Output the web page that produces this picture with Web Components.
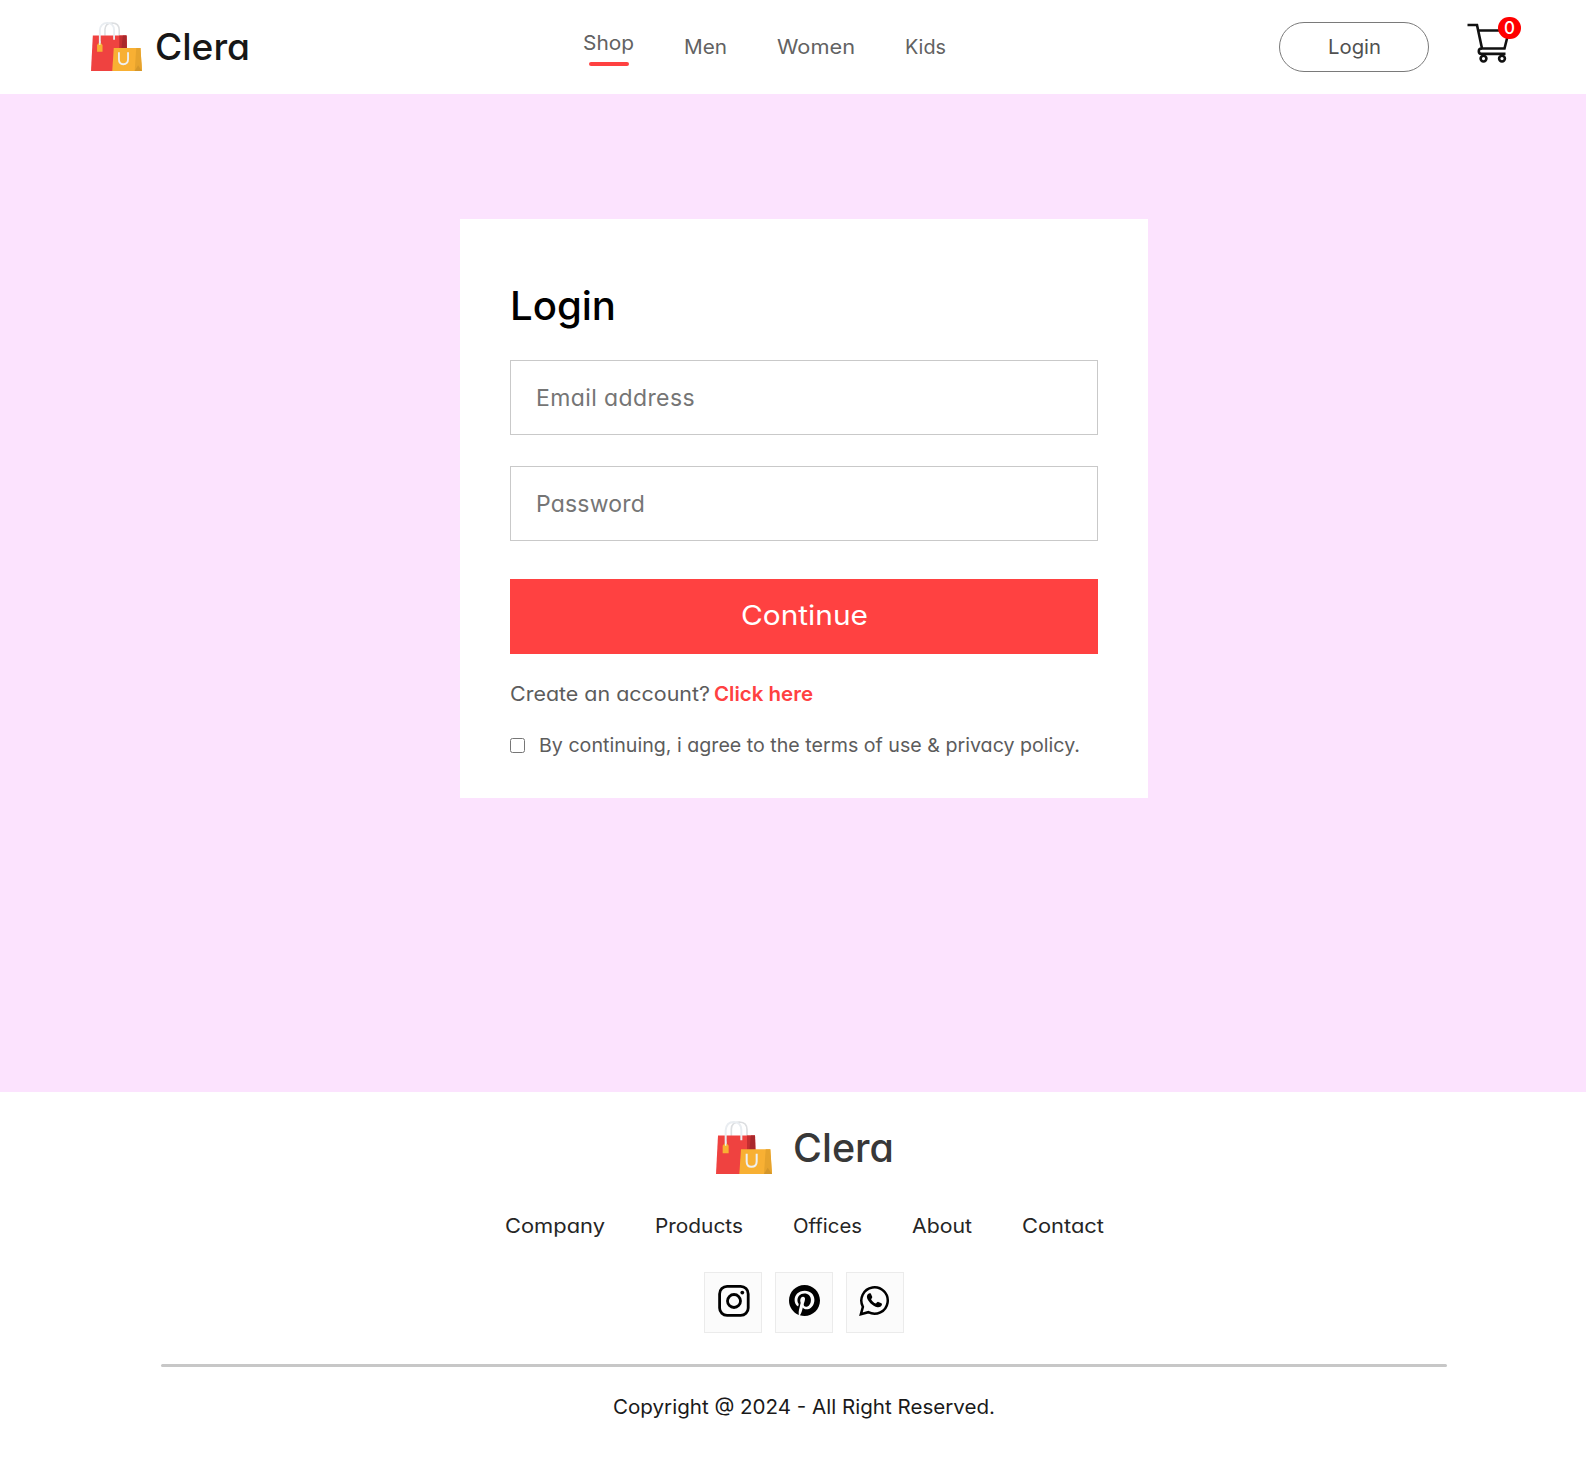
<!DOCTYPE html>
<html lang="en">
<head>
<meta charset="utf-8">
<title>Clera</title>
<style>
body{margin:0;background:#fff;font-family:Inter,"Open Sans",sans-serif;font-feature-settings:"cv11" 1}
</style>
</head>
<body>
<clera-app></clera-app>
<script>
function define(name, html, ready) {
  const t = document.createElement('template');
  t.innerHTML = html;
  customElements.define(name, class extends HTMLElement {
    connectedCallback() {
      if (this.shadowRoot) return;
      this.attachShadow({mode: 'open'}).append(t.content.cloneNode(true));
      if (ready) ready(this, this.shadowRoot);
    }
  });
}

// Single line of text whose glyphs are widened to a given advance width.
define('fit-text', `<style>
  :host{display:inline-block;white-space:nowrap;line-height:30px;font-size:20px;text-align:left}
  span{display:inline-block;transform-origin:0 50%}
</style><span><slot></slot></span>`, (el, root) => {
  const w = parseFloat(el.getAttribute('w'));
  const span = root.querySelector('span');
  const natural = span.getBoundingClientRect().width;
  el.style.width = w + 'px';
  span.style.transform = 'scaleX(' + (w / natural) + ')';
});

define('bag-logo', `<style>:host{display:block}svg{display:block;width:100%;height:100%}</style>
<svg viewBox="48 122 168 160" preserveAspectRatio="none">
  <path d="M94 167V146Q95 125 118 125Q141 126 141 148V167" fill="none" stroke="#dcdee0" stroke-width="5"/>
  <path d="M54 166H165L168 282H48Z" fill="#ef4240"/>
  <path d="M141 166H165L166 210H141Z" fill="#c42e31"/>
  <path d="M153 166H165L166 210H148Z" fill="#a9282c"/>
  <path d="M77 194V150Q79 125 102 125Q123 126 124 148V180" fill="none" stroke="#e9edf1" stroke-width="6"/>
  <path d="M68 197L73 191H81L86 197V219H68Z" fill="#f8b033"/>
  <path d="M77 184V197" stroke="#e9edf1" stroke-width="4"/>
  <path d="M123 207H211L216 282H118Z" fill="#f8b033"/>
  <path d="M197 207H211L216 282H192Z" fill="#e6a32d"/>
  <path d="M203 263L216 282H192Z" fill="#d4962a"/>
  <path d="M140 221V244Q140 260 154 260Q170 260 170 244V221" fill="none" stroke="#eef0f2" stroke-width="6"/>
</svg>`);

define('nav-item', `<style>
  :host{display:flex;flex-direction:column;align-items:center;gap:4px;color:#626262}
  i{display:none;width:40px;height:4px;border-radius:4px;background:#ff4141}
  :host([active]) i{display:block}
</style><slot></slot><i></i>`);

define('cart-icon', `<style>
  :host{display:block;position:relative;width:42px;height:40px}
  svg{display:block}
  b{position:absolute;left:31px;top:-6px;width:23px;height:22px;border-radius:11px;background:#f00;color:#fff;font-size:17px;font-weight:500;line-height:22px;text-align:center}
</style>
<svg width="42" height="40" viewBox="0 0 42 40" fill="none" stroke="#111" stroke-width="2.6">
  <path d="M.5 2H10L15 25.500H37.500L42 7.500H11"/>
  <path d="M15 25.500H14.500A2.600 2.600 0 0 0 14.500 30.900H38.500"/>
  <circle cx="16.500" cy="35.600" r="2.900"/><circle cx="35" cy="35.600" r="2.900"/>
</svg><b>0</b>`);

define('site-header', `<style>
  :host{display:flex;align-items:center;height:94px;box-sizing:border-box;padding-left:90.500px}
  bag-logo{width:51px;height:49px;margin-bottom:1px}
  .name{font-size:37px;font-weight:500;color:#171717;margin:0 0 1px 13.500px}
  nav{display:flex;align-items:center;gap:50px;margin-left:333px}
  button{margin:0 0 0 333px;width:150px;height:50px;padding:0;border:1px solid #7a7a7a;border-radius:75px;background:#fff;color:#515151;font:inherit;font-feature-settings:inherit}
  cart-icon{margin:-9px 0 0 38px}
</style>
<bag-logo></bag-logo><fit-text class="name" w="95">Clera</fit-text>
<nav>
  <nav-item active><fit-text w="51">Shop</fit-text></nav-item>
  <nav-item><fit-text w="43">Men</fit-text></nav-item>
  <nav-item><fit-text w="78">Women</fit-text></nav-item>
  <nav-item><fit-text w="41">Kids</fit-text></nav-item>
</nav>
<button><fit-text w="53">Login</fit-text></button>
<cart-icon></cart-icon>`);

define('text-field', `<style>
  :host{display:block;height:75px}
  input{display:block;width:100%;height:75px;box-sizing:border-box;border:1px solid #c9c9c9;padding:0 0 0 25px;outline:none;font:inherit;font-size:23px;font-feature-settings:inherit;background:#fff}
  input::placeholder{color:#757575}
  span{font-size:23px;white-space:nowrap;position:absolute;visibility:hidden}
</style><input>`, (el, root) => {
  const input = root.querySelector('input');
  input.type = el.getAttribute('type');
  input.placeholder = el.getAttribute('label');
  const probe = document.createElement('span');
  probe.textContent = input.placeholder;
  root.append(probe);
  const w = probe.getBoundingClientRect().width;
  probe.remove();
  input.style.letterSpacing = ((parseFloat(el.getAttribute('w')) - w) / input.placeholder.length) + 'px';
});

define('login-card', `<style>
  :host{display:block;width:688px;height:579px;box-sizing:border-box;background:#fff;padding:57px 50px 0}
  h1{margin:0 0 24px;height:60px;font-size:40px;font-weight:500;line-height:60px;color:#000}
  h1 fit-text{font-size:40px;line-height:60px}
  .fields{display:flex;flex-direction:column;gap:31px}
  button{display:block;width:588px;height:75px;margin:38px 0 25px;padding:0 0 2px;border:0;background:#ff4141;color:#fff;font:inherit;font-feature-settings:inherit}
  button fit-text{font-size:27px;line-height:40px}
  p{margin:0;display:flex;gap:4px;height:30px;color:#5c5c5c}
  p b{color:#ff4141;font-weight:600}
  .agree{display:flex;align-items:center;height:30px;margin-top:21px;color:#5c5c5c}
  .agree fit-text{font-size:19px;margin-top:2px}
  input{appearance:none;width:15px;height:15px;margin:0 14px 0 0;box-sizing:border-box;border:1px solid #767676;border-radius:2.500px;background:#fff}
</style>
<h1><fit-text w="106">Login</fit-text></h1>
<div class="fields"><text-field type="text" label="Email address" w="159"></text-field><text-field type="password" label="Password" w="109"></text-field></div>
<button><fit-text w="127">Continue</fit-text></button>
<p><fit-text w="200">Create an account?</fit-text><b><fit-text w="99">Click here</fit-text></b></p>
<div class="agree"><input type="checkbox"><fit-text w="541">By continuing, i agree to the terms of use &amp; privacy policy.</fit-text></div>`);

define('social-link', `<style>
  :host{display:flex;justify-content:center;align-items:flex-start;width:58px;height:61px;box-sizing:border-box;border:1px solid #ebebeb;background:#fbfbfb;padding-top:12px}
</style><slot></slot>`);

define('site-footer', `<style>
  :host{display:flex;flex-direction:column;align-items:center;box-sizing:border-box;padding:26px 0 0 22px;height:367px;color:#252525}
  .logo{display:flex;align-items:center;height:60px;padding-left:2px}
  bag-logo{width:56px;height:53px;margin-bottom:1px}
  .logo fit-text{font-size:39px;font-weight:500;color:#383838;margin-left:21px}
  .links{display:flex;gap:50px;margin-top:33px}
  .social{display:flex;gap:13px;margin-top:31px}
  hr{width:1286px;height:3px;margin:31px 0 25px;border:0;border-radius:2px;background:#c7c7c7}
  .copy{color:#1a1a1a}
</style>
<div class="logo"><bag-logo></bag-logo><fit-text w="101">Clera</fit-text></div>
<div class="links"><fit-text w="100">Company</fit-text><fit-text w="88">Products</fit-text><fit-text w="69">Offices</fit-text><fit-text w="60">About</fit-text><fit-text w="82">Contact</fit-text></div>
<div class="social">
  <social-link><svg width="32" height="32" viewBox="0 0 32 32" fill="none" stroke="#000" style="margin-left:1px"><rect x="1.600" y="1.400" width="28.600" height="29" rx="7.500" stroke-width="2.800"/><circle cx="16" cy="16" r="6.500" stroke-width="2.800"/><circle cx="24.300" cy="7.600" r="1.900" fill="#000" stroke="none"/></svg></social-link>
  <social-link><svg width="31" height="31" viewBox="0 0 24 24"><path d="M12 0C5.373 0 0 5.372 0 12c0 5.084 3.163 9.426 7.627 11.174-.105-.949-.2-2.405.042-3.441.218-.937 1.407-5.965 1.407-5.965s-.359-.719-.359-1.782c0-1.668.967-2.914 2.171-2.914 1.023 0 1.518.769 1.518 1.690 0 1.029-.655 2.568-.994 3.995-.283 1.194.599 2.169 1.777 2.169 2.133 0 3.772-2.249 3.772-5.495 0-2.873-2.064-4.882-5.012-4.882-3.414 0-5.418 2.561-5.418 5.207 0 1.031.397 2.138.893 2.738a.36.36 0 0 1 .083.345l-.333 1.360c-.053.22-.174.267-.402.161-1.499-.698-2.436-2.889-2.436-4.649 0-3.785 2.750-7.262 7.929-7.262 4.163 0 7.398 2.967 7.398 6.931 0 4.136-2.607 7.464-6.227 7.464-1.216 0-2.359-.631-2.750-1.378l-.748 2.853c-.271 1.043-1.002 2.350-1.492 3.146C9.570 23.812 10.763 24 12 24c6.627 0 12-5.373 12-12S18.627 0 12 0z"/></svg></social-link>
  <social-link><svg width="31" height="31" viewBox="0 0 31 31" style="margin-right:2px"><path d="M1.900 29.200L3.900 21.800A13.200 13.200 0 1 1 9.300 27.200Z" fill="none" stroke="#000" stroke-width="2.500"/><path d="M10.500 8.200C9 8.500 7.800 10 7.900 12C8.200 15.500 13.500 21.500 18.500 22.300C20.800 22.600 22.800 21.200 23 19.300C23 18.500 22.500 18.100 19.300 16.900C18.400 16.700 18 17.500 17 18.500C14.800 18 12.800 15.900 12.100 14.200C12.900 13.200 13.500 12.500 13.200 11.800L11.900 8.700C11.600 8.200 11.200 8.100 10.500 8.200Z"/></svg></social-link>
</div>
<hr>
<fit-text class="copy" w="382">Copyright @ 2024 - All Right Reserved.</fit-text>`);

define('clera-app', `<style>
  :host{display:block}
  main{height:998px;box-sizing:border-box;background:#fce3fe;padding:125px 0 0 460px}
</style><site-header></site-header><main><login-card></login-card></main><site-footer></site-footer>`);
</script>
</body>
</html>
